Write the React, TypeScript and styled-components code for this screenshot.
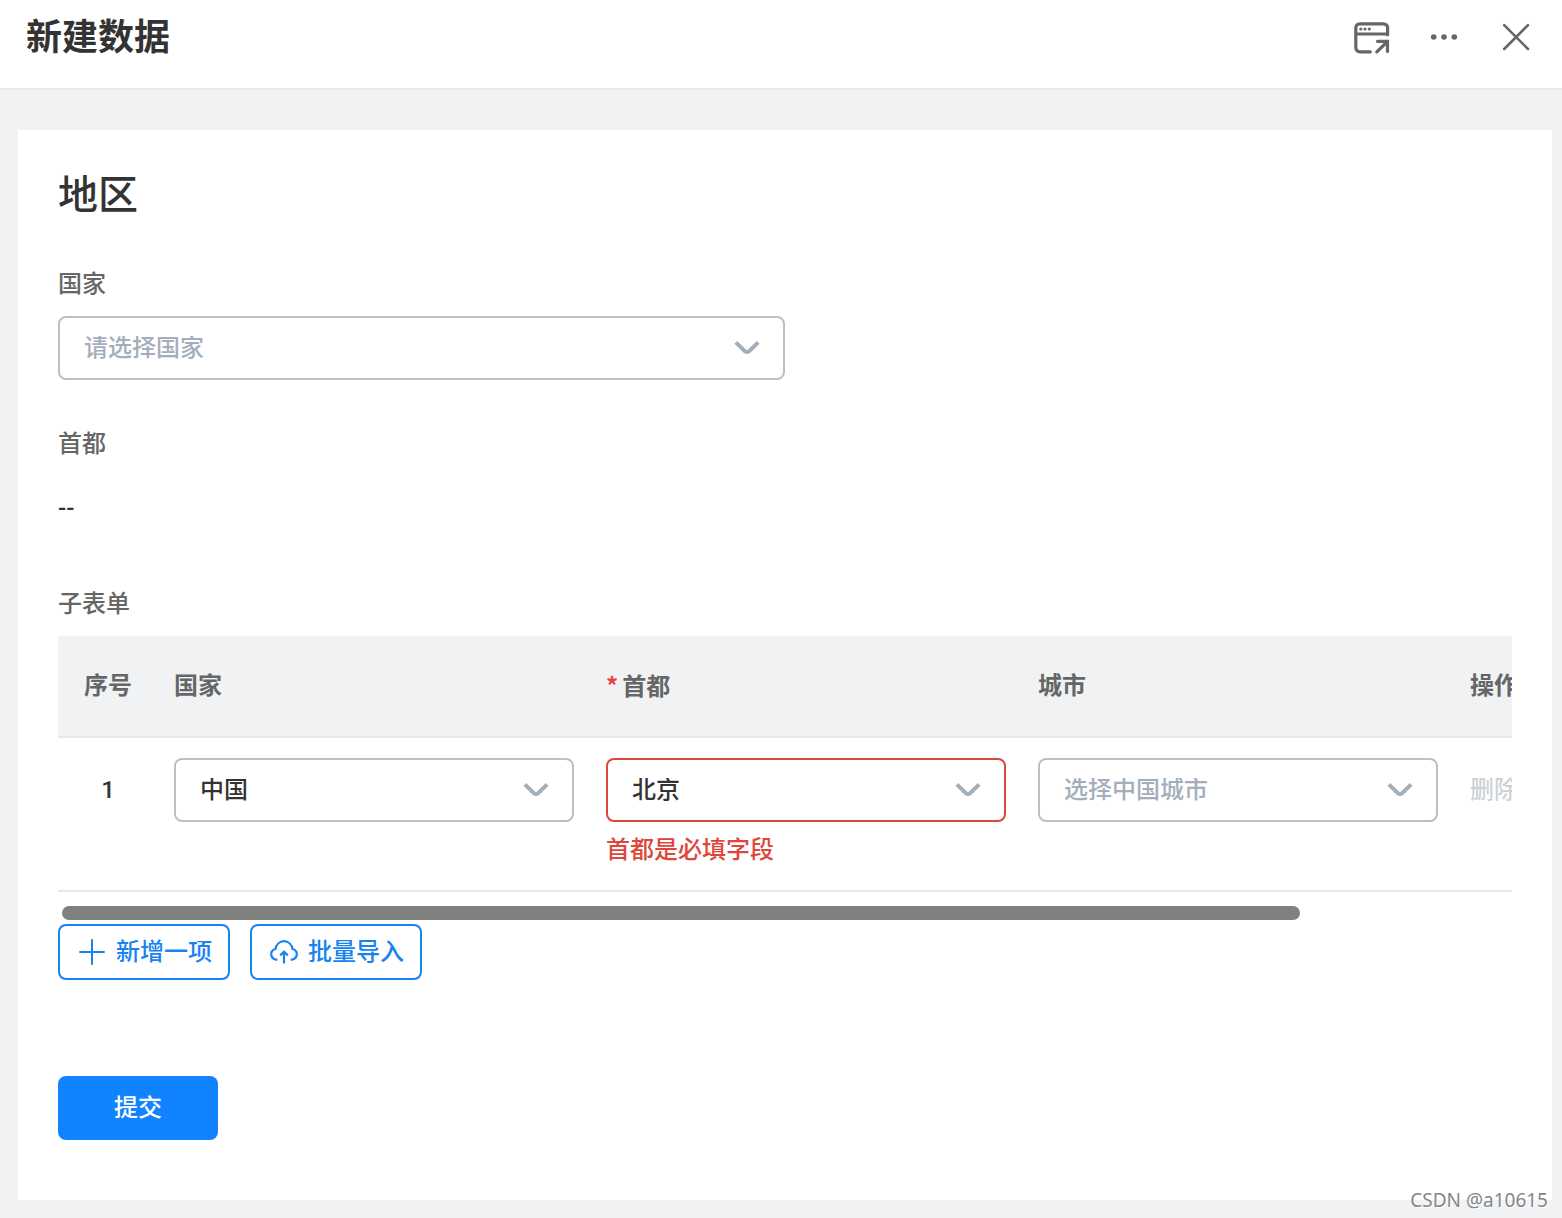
import React, { useEffect, useRef, useState } from "react";
import styled, { createGlobalStyle, css } from "styled-components";

const GlobalStyle = createGlobalStyle`
  *, *::before, *::after { box-sizing: border-box; }
  body {
    margin: 0;
    background: #f0f2f4;
    color: #333;
    font-family: Roboto, "Noto Sans CJK SC", sans-serif;
    font-size: 24px;
    font-weight: 500;
    line-height: 24px;
  }
  button, select { font: inherit; }
`;

const Page = styled.div`
  position: relative;
  display: flex;
  flex-direction: column;
  min-height: 100vh;
`;

const Header = styled.header`
  display: flex;
  align-items: center;
  justify-content: space-between;
  height: 90px;
  padding: 0 26px 12px;
  background: #fff;
  border-bottom: 2px solid #e6e7e8;
`;

const HeaderTitle = styled.h1`
  margin: 0;
  font-size: 36px;
  line-height: 48px;
  font-weight: 700;
`;

const Toolbar = styled.div`
  display: flex;
  gap: 32px;
`;

const IconButton = styled.button`
  width: 40px;
  height: 40px;
  padding: 0;
  border: 0;
  background: none;
  color: #666;
  cursor: pointer;

  svg { display: block; }
`;

const Main = styled.main`
  flex: 1;
  display: flex;
  padding: 40px 10px 18px 18px;
`;

const Card = styled.form`
  flex: 1;
  min-width: 0;
  padding: 40px 40px 60px;
  background: #fff;
`;

const FormTitle = styled.h2`
  margin: 0 0 50px;
  font-size: 40px;
  line-height: 52px;
  font-weight: 500;
`;

const Field = styled.div<{ $half?: boolean }>`
  width: ${(p) => (p.$half ? "50%" : "100%")};
  margin-bottom: 52px;
`;

const labelStyle = css`
  display: block;
  margin: 0 0 20px;
  color: #666;
`;

const Label = styled.label`
  ${labelStyle}
`;

const LabelText = styled.div`
  ${labelStyle}
`;

const Value = styled.div`
  line-height: 64px;
`;

const SelectBox = styled.div`
  position: relative;
  height: 64px;
`;

const Select = styled.select<{ $empty?: boolean; $error?: boolean }>`
  display: block;
  width: 100%;
  height: 100%;
  padding: 0 60px 0 24px;
  appearance: none;
  border: 2px solid ${(p) => (p.$error ? "#dd463c" : "#b9c0c7")};
  border-radius: 8px;
  outline: none;
  background: #fff;
  color: ${(p) => (p.$empty ? "#a4aebb" : "#333")};
  line-height: 24px;
`;

const Arrow = styled.svg`
  position: absolute;
  top: 18px;
  right: 24px;
  color: #a4aebb;
  pointer-events: none;
`;

const TableScroller = styled.div`
  overflow-x: auto;
  scrollbar-width: none;
`;

const Table = styled.table`
  width: 1698px;
  table-layout: fixed;
  border-collapse: separate;
  border-spacing: 0;
`;

const Column = styled.col<{ $width?: number }>`
  width: ${(p) => (p.$width ? `${p.$width}px` : "auto")};
`;

const HeadCell = styled.th<{ $center?: boolean }>`
  height: 102px;
  padding: 0 16px;
  background: #f0f2f4;
  border-bottom: 2px solid #e6e7e8;
  color: #666;
  font-weight: 700;
  text-align: ${(p) => (p.$center ? "center" : "left")};
`;

const Required = styled.span`
  margin-right: 4px;
  color: #e8453a;
  font-family: "Noto Sans CJK SC", sans-serif;
`;

const Cell = styled.td<{ $center?: boolean }>`
  padding: 20px 16px;
  border-bottom: 2px solid #e6e7e8;
  line-height: 64px;
  text-align: ${(p) => (p.$center ? "center" : "left")};
  vertical-align: top;
`;

const ErrorText = styled.div`
  margin-top: 8px;
  color: #e0453a;
  line-height: 40px;
`;

const TextButton = styled.button`
  padding: 0;
  border: 0;
  background: none;
  color: #cdd1d6;
  line-height: 64px;
`;

const ScrollTrack = styled.div`
  height: 14px;
  margin: 14px 4px 4px;
`;

const ScrollThumb = styled.div`
  height: 100%;
  border-radius: 7px;
  background: #808080;
`;

const Actions = styled.div`
  display: flex;
  gap: 20px;
  margin-bottom: 96px;
`;

const OutlineButton = styled.button`
  display: flex;
  align-items: center;
  gap: 8px;
  height: 56px;
  padding: 0 16px;
  border: 2px solid #1783f0;
  border-radius: 8px;
  background: #fff;
  color: #1783f0;
  cursor: pointer;
`;

const SubmitButton = styled.button`
  display: block;
  width: 160px;
  height: 64px;
  padding: 0;
  border: 0;
  border-radius: 8px;
  background: #1283ff;
  color: #fff;
  cursor: pointer;
`;

const Watermark = styled.div`
  position: absolute;
  right: 14px;
  bottom: 6px;
  color: #85878a;
  font-family: "Noto Sans", sans-serif;
  font-size: 19px;
  font-weight: 400;
  text-shadow: 1px 1px 0 #fff;
`;

type DropdownProps = {
  id?: string;
  label?: string;
  placeholder: string;
  options: string[];
  initial?: string;
  error?: boolean;
};

function Dropdown({ id, label, placeholder, options, initial = "", error }: DropdownProps) {
  const [value, setValue] = useState(initial);
  return (
    <SelectBox>
      <Select
        id={id}
        aria-label={label}
        aria-invalid={error || undefined}
        value={value}
        onChange={(e) => setValue(e.target.value)}
        $empty={!value}
        $error={error}
      >
        <option value="">{placeholder}</option>
        {options.map((o) => (
          <option key={o} value={o}>{o}</option>
        ))}
      </Select>
      <Arrow width="28" height="28" viewBox="0 0 28 28" fill="none" stroke="currentColor" strokeWidth="4" strokeLinejoin="round" aria-hidden="true">
        <path d="M2.800 8.400 12 17.200q2 1.700 4 0L25.200 8.400" />
      </Arrow>
    </SelectBox>
  );
}

function OpenWindowIcon() {
  return (
    <svg width="40" height="40" viewBox="0 0 40 40" fill="none" stroke="currentColor" strokeWidth="3.2" strokeLinecap="round" aria-hidden="true">
      <path d="M18.300 33.800H7.800a4 4 0 0 1-4-4V9.800a4 4 0 0 1 4-4h23.800a4 4 0 0 1 4 4v7" />
      <path d="M4 16h31.400" strokeWidth="2.800" />
      <path d="M25.500 23.300h10v10.200M35 24 24.800 33.800" strokeLinejoin="miter" />
      <g fill="currentColor" stroke="none">
        <circle cx="8.800" cy="11" r="1.600" />
        <circle cx="13" cy="11" r="1.600" />
        <circle cx="17.300" cy="11" r="1.600" />
      </g>
    </svg>
  );
}

function MoreIcon() {
  return (
    <svg width="40" height="40" viewBox="0 0 40 40" fill="currentColor" aria-hidden="true">
      <circle cx="9.7" cy="19" r="2.8" />
      <circle cx="20" cy="19" r="2.8" />
      <circle cx="30.3" cy="19" r="2.8" />
    </svg>
  );
}

function CloseIcon() {
  return (
    <svg width="40" height="40" viewBox="0 0 40 40" fill="none" stroke="currentColor" strokeWidth="2.6" strokeLinecap="round" aria-hidden="true">
      <path d="M8.200 7.200l23.800 23.800M32 7.200 8.200 31" />
    </svg>
  );
}

function PlusIcon() {
  return (
    <svg width="32" height="32" viewBox="0 0 32 32" fill="none" stroke="currentColor" strokeWidth="2" aria-hidden="true">
      <path d="M16 3.3v25.4M3.3 16h25.4" />
    </svg>
  );
}

function CloudUploadIcon() {
  return (
    <svg width="32" height="32" viewBox="0 0 32 32" fill="none" stroke="currentColor" strokeWidth="2.2" aria-hidden="true">
      <path d="M9.400 24C5.600 23.400 3.200 21.200 3.200 18.200c0-2.500 1.600-4.500 4.200-5.200C8.200 8.600 11.600 5.200 16 5.200s7.800 3.400 8.600 7.800c2.600.7 4.200 2.700 4.200 5.200 0 3-2.400 5.200-6.200 5.800" />
      <path d="M16 27.400V16.200M12.200 19.400 16 15.800l3.800 3.600" />
    </svg>
  );
}

function SubTable() {
  const scroller = useRef<HTMLDivElement>(null);
  const [thumb, setThumb] = useState({ width: 100, left: 0 });

  useEffect(() => {
    const el = scroller.current;
    if (!el) return;
    const measure = () => {
      const trackWidth = el.clientWidth - 8;
      setThumb({
        width: (el.clientWidth / el.scrollWidth) * 100,
        left: (el.scrollLeft / el.scrollWidth) * trackWidth,
      });
    };
    measure();
    el.addEventListener("scroll", measure);
    window.addEventListener("resize", measure);
    return () => {
      el.removeEventListener("scroll", measure);
      window.removeEventListener("resize", measure);
    };
  }, []);

  return (
    <>
      <TableScroller ref={scroller}>
        <Table aria-labelledby="subform-label">
          <colgroup>
            <Column $width={100} />
            <Column $width={432} />
            <Column $width={432} />
            <Column $width={432} />
            <Column />
          </colgroup>
          <thead>
            <tr>
              <HeadCell $center>序号</HeadCell>
              <HeadCell>国家</HeadCell>
              <HeadCell><Required>*</Required>首都</HeadCell>
              <HeadCell>城市</HeadCell>
              <HeadCell>操作</HeadCell>
            </tr>
          </thead>
          <tbody>
            <tr>
              <Cell $center>1</Cell>
              <Cell>
                <Dropdown label="国家" placeholder="请选择国家" options={["中国"]} initial="中国" />
              </Cell>
              <Cell>
                <Dropdown label="首都" placeholder="请选择首都" options={["北京"]} initial="北京" error />
                <ErrorText role="alert">首都是必填字段</ErrorText>
              </Cell>
              <Cell>
                <Dropdown label="城市" placeholder="选择中国城市" options={["上海", "广州"]} />
              </Cell>
              <Cell>
                <TextButton type="button" disabled>删除</TextButton>
              </Cell>
            </tr>
          </tbody>
        </Table>
      </TableScroller>
      <ScrollTrack aria-hidden="true">
        <ScrollThumb style={{ width: `${thumb.width}%`, marginLeft: thumb.left }} />
      </ScrollTrack>
    </>
  );
}

export default function App() {
  return (
    <Page>
      <GlobalStyle />
      <Header>
        <HeaderTitle>新建数据</HeaderTitle>
        <Toolbar>
          <IconButton type="button" aria-label="在新窗口打开"><OpenWindowIcon /></IconButton>
          <IconButton type="button" aria-label="更多"><MoreIcon /></IconButton>
          <IconButton type="button" aria-label="关闭"><CloseIcon /></IconButton>
        </Toolbar>
      </Header>
      <Main>
        <Card onSubmit={(e) => e.preventDefault()}>
          <FormTitle>地区</FormTitle>
          <Field $half>
            <Label htmlFor="country">国家</Label>
            <Dropdown id="country" placeholder="请选择国家" options={["中国"]} />
          </Field>
          <Field>
            <LabelText>首都</LabelText>
            <Value>--</Value>
          </Field>
          <LabelText id="subform-label">子表单</LabelText>
          <SubTable />
          <Actions>
            <OutlineButton type="button"><PlusIcon />新增一项</OutlineButton>
            <OutlineButton type="button"><CloudUploadIcon />批量导入</OutlineButton>
          </Actions>
          <SubmitButton type="submit">提交</SubmitButton>
        </Card>
      </Main>
      <Watermark>CSDN @a10615</Watermark>
    </Page>
  );
}
